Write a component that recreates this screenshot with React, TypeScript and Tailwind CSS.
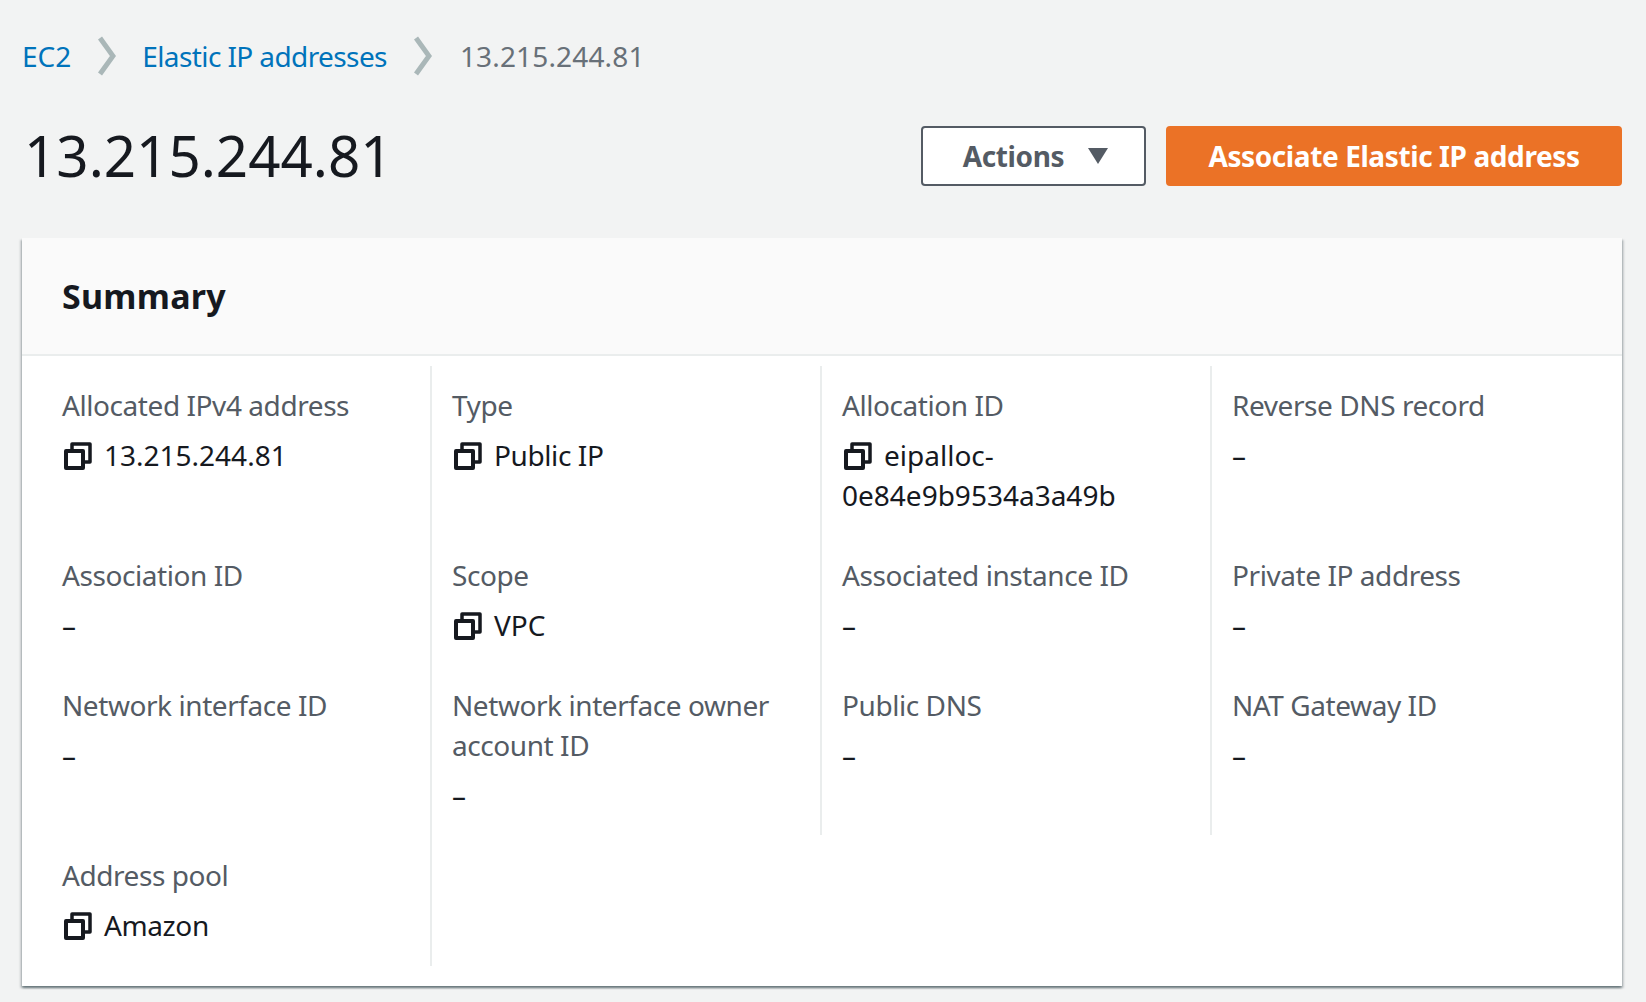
const FONT = "font-['Noto_Sans',sans-serif]";

type Item = { label: string; value?: string; copy?: boolean; tight?: boolean };

const ITEMS: Item[] = [
  { label: "Allocated IPv4 address", value: "13.215.244.81", copy: true },
  { label: "Type", value: "Public IP", copy: true, tight: true },
  { label: "Allocation ID", value: "eipalloc-0e84e9b9534a3a49b", copy: true },
  { label: "Reverse DNS record" },
  { label: "Association ID" },
  { label: "Scope", value: "VPC", copy: true },
  { label: "Associated instance ID" },
  { label: "Private IP address" },
  { label: "Network interface ID" },
  { label: "Network interface owner account ID" },
  { label: "Public DNS" },
  { label: "NAT Gateway ID" },
];

function CopyIcon() {
  return (
    <svg viewBox="0 0 28 28" className="w-7 h-7 inline-block align-[-4px] mr-3 ml-[2px]" fill="none" stroke="#16191f" strokeLinejoin="round">
      <path d="M8 8V2h18v18h-6" strokeWidth="3.5" />
      <rect x="2" y="9" width="17" height="17" strokeWidth="4" />
    </svg>
  );
}

function Chevron() {
  return (
    <svg viewBox="0 0 18 40" className="w-[18px] h-10 ml-[27px] mr-[26px]" fill="none" stroke="#aab7b8" strokeWidth="5">
      <path d="M2 2l13 18L2 38" />
    </svg>
  );
}

function Detail({ item }: { item: Item }) {
  return (
    <>
      <div className="text-[#545b64] tracking-[-0.43px]">{item.label}</div>
      <div className={`mt-[10px] text-[#16191f] ${item.tight ? "tracking-[-0.4px]" : ""}`}>
        {item.copy && <CopyIcon />}
        {item.value ?? "–"}
      </div>
    </>
  );
}

export default function App() {
  return (
    <div className={`${FONT} w-[1646px] h-[1002px] overflow-hidden bg-[#f2f3f3] px-[22px] pt-[36px] text-[28px] leading-[40px]`}>
      <nav className="flex items-center h-[40px]">
        <a className="text-[#0073bb]">EC2</a>
        <Chevron />
        <a className="text-[#0073bb] tracking-[-0.6px]">Elastic IP addresses</a>
        <Chevron />
        <span className="ml-[2px] text-[#687078] tracking-[0.15px]">13.215.244.81</span>
      </nav>

      <div className="flex items-center justify-between mt-[50px] h-[60px] pr-[2px]">
        <h1 className="pl-[2px] text-[56.5px] leading-[60px] font-normal text-[#16191f]">13.215.244.81</h1>
        <div className="flex gap-5">
          <button className="flex items-center justify-center w-[225px] h-[60px] pl-1 bg-white border-2 border-[#545b64] rounded-[4px] font-bold text-[#545b64] tracking-[-0.4px]">
            Actions
            <svg viewBox="0 0 20 16" className="w-5 h-4 ml-6">
              <path d="M0 0h20L10 16z" fill="#545b64" />
            </svg>
          </button>
          <button className="w-[456px] h-[60px] bg-[#eb7226] rounded-[4px] font-bold text-white tracking-[-0.4px]">
            Associate Elastic IP address
          </button>
        </div>
      </div>

      <section className="mt-[52px] w-[1600px] bg-white shadow-[0_2px_2px_0_rgba(0,28,36,0.4),2px_2px_2px_0_rgba(0,28,36,0.15),-2px_2px_2px_0_rgba(0,28,36,0.15)]">
        <div className="h-[118px] flex items-center px-10 bg-[#fafafa] border-b-2 border-[#eaeded]">
          <h2 className="text-[34px] font-bold text-[#16191f] tracking-[0.25px]">Summary</h2>
        </div>
        <div className="pl-5 pt-[10px] pb-5">
          <div className="grid grid-cols-[repeat(4,390px)]">
            {ITEMS.map((item, i) => (
              <div
                key={item.label}
                className={`pl-5 pr-5 border-[#eaeded] ${i % 4 < 3 ? "border-r-2" : ""} ${i < 4 ? "pt-[19px]" : ""} ${i >= 8 ? "pb-5" : "pb-10"}`}
              >
                <Detail item={item} />
              </div>
            ))}
            <div className="pl-5 pr-5 pt-5 pb-[21px] border-r-2 border-[#eaeded]">
              <Detail item={{ label: "Address pool", value: "Amazon", copy: true, tight: true }} />
            </div>
          </div>
        </div>
      </section>
    </div>
  );
}
